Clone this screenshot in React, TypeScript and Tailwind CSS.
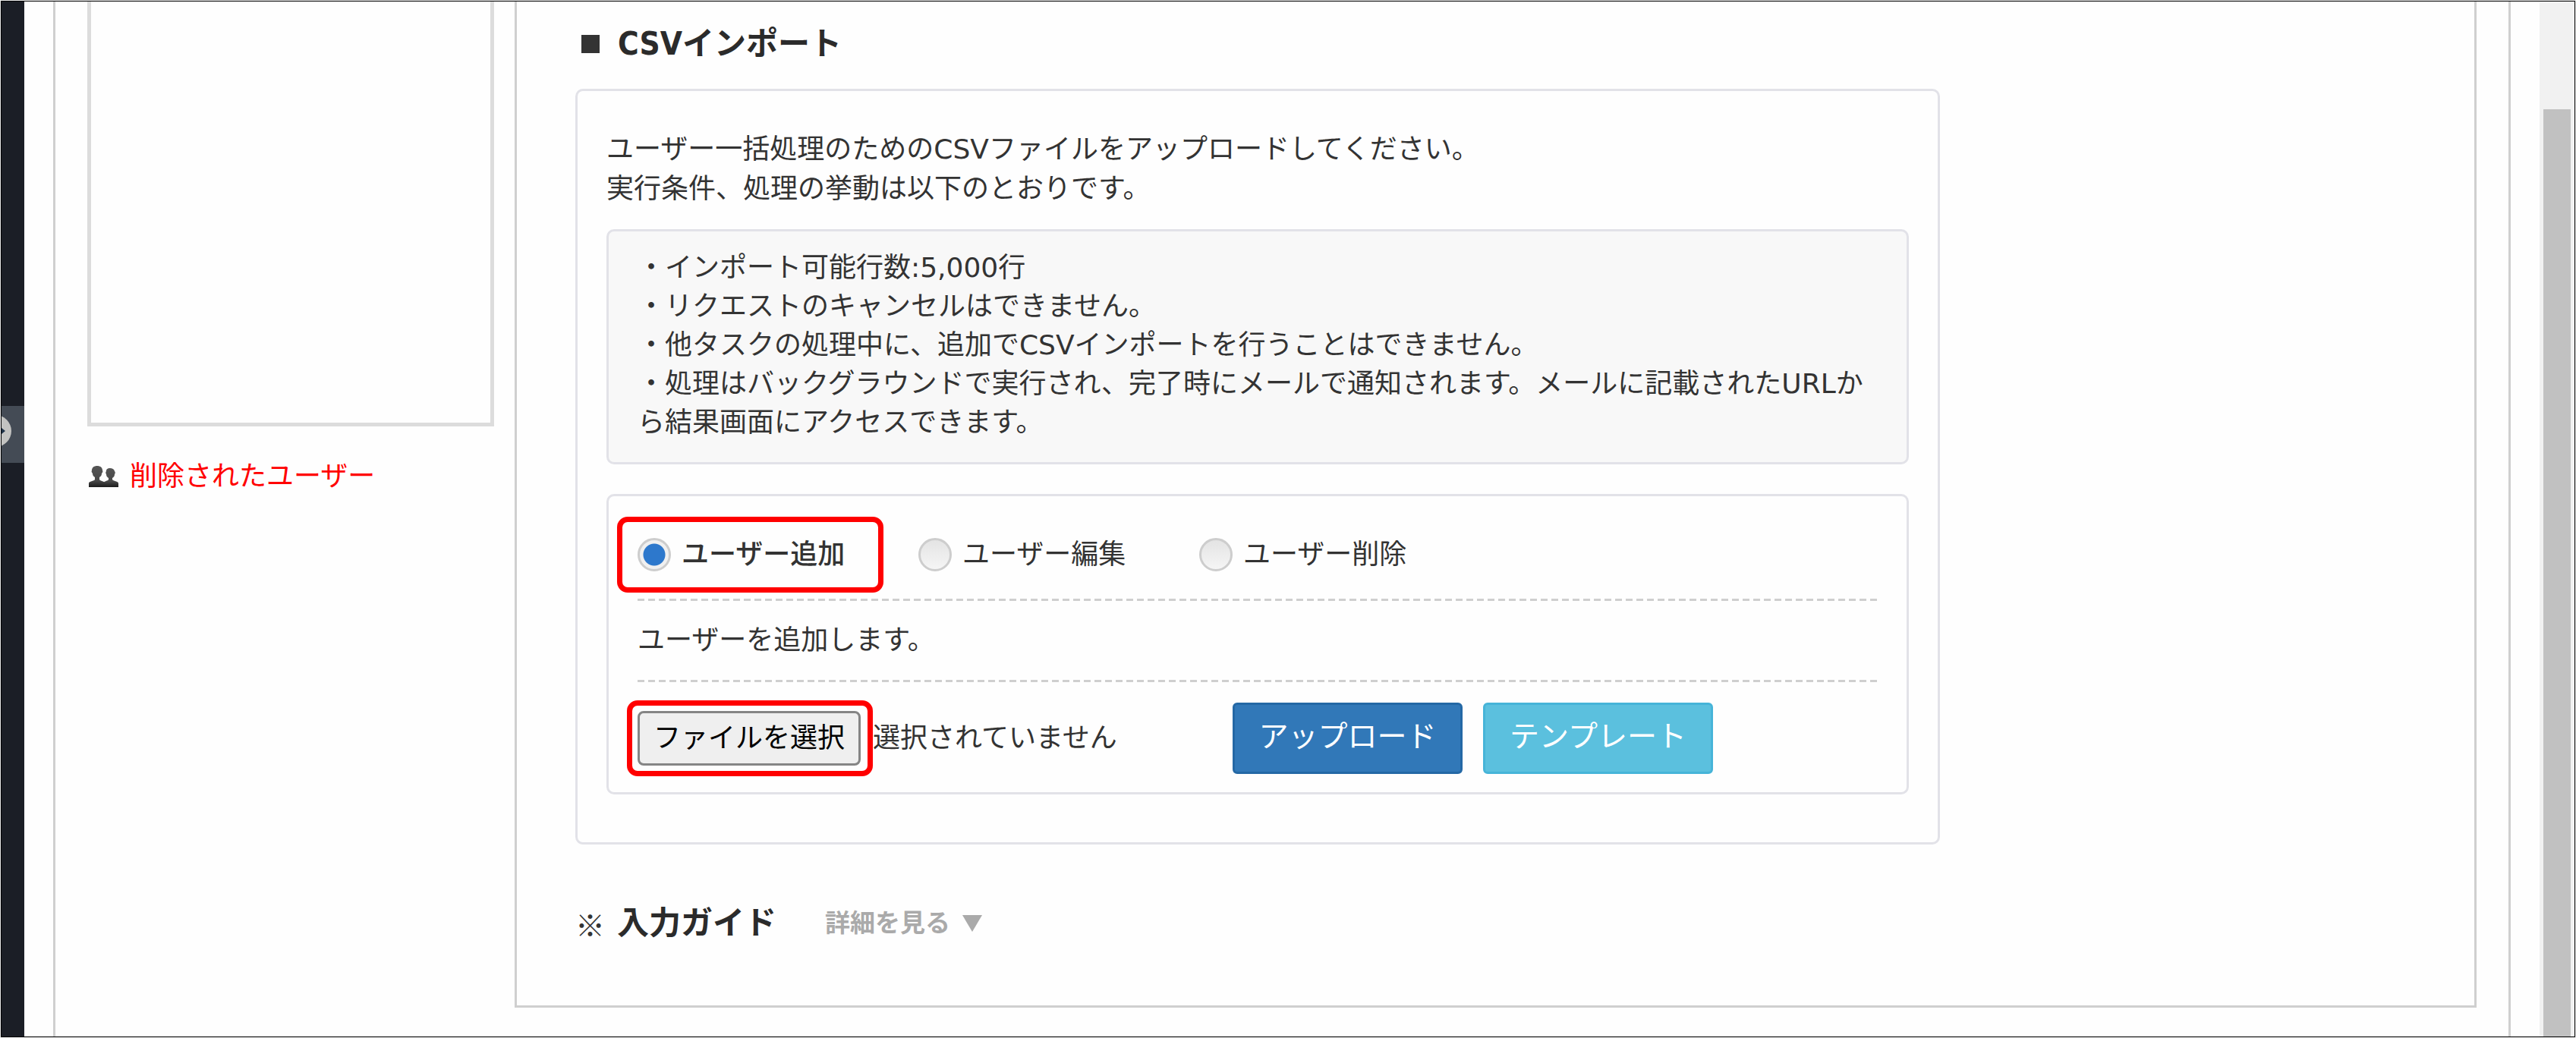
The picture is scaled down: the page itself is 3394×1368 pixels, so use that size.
import { useRef, useState } from 'react'

type Mode = 'add' | 'edit' | 'delete'

const modes: { value: Mode; label: string; description: string }[] = [
  { value: 'add', label: 'ユーザー追加', description: 'ユーザーを追加します。' },
  { value: 'edit', label: 'ユーザー編集', description: 'ユーザーを編集します。' },
  { value: 'delete', label: 'ユーザー削除', description: 'ユーザーを削除します。' },
]

const notes = [
  '・インポート可能行数:5,000行',
  '・リクエストのキャンセルはできません。',
  '・他タスクの処理中に、追加でCSVインポートを行うことはできません。',
  '・処理はバックグラウンドで実行され、完了時にメールで通知されます。メールに記載されたURLから結果画面にアクセスできます。',
]

function UsersIcon() {
  return (
    <svg viewBox="0 0 39 28" className="h-7 w-[39px] shrink-0" aria-hidden="true">
      <defs>
        <linearGradient id="users-fill" x1="0" y1="0" x2="0" y2="1">
          <stop offset="0" stopColor="#555" />
          <stop offset="0.7" stopColor="#484848" />
          <stop offset="1" stopColor="#1c1c1c" />
        </linearGradient>
      </defs>
      <path
        fill="url(#users-fill)"
        d="M20 28v-6c0-2 5-2 6-4v-2c-2-1-3-3-3-5-1-1-1-3 0-4 0-3 2-4 5-4s5 1 6 4c1 1 1 3 0 4 0 2-1 4-3 5v2c1 2 8 2 8 5v5z"
      />
      <path
        fill="url(#users-fill)"
        d="M0 28v-5c0-3 7-3 8-5v-3c-2-1-3-3-3-5-1-1-2-3-1-4 0-4 3-6 7-6s7 2 7 6c1 1 0 3-1 4 0 2-1 4-3 5v3c1 2 7 2 8 5v5z"
      />
    </svg>
  )
}

function Highlight({ className }: { className: string }) {
  return (
    <span
      className={`pointer-events-none absolute rounded-[14px] border-[7px] border-[#ff0000] ${className}`}
    />
  )
}

function Divider() {
  return (
    <div className="h-[3px] bg-[repeating-linear-gradient(90deg,#cfcfcf_0_9px,transparent_9px_14px)]" />
  )
}

function ImportForm() {
  const [mode, setMode] = useState<Mode>('add')
  const [fileName, setFileName] = useState('')
  const fileRef = useRef<HTMLInputElement>(null)

  return (
    <form
      className="mt-[39px] rounded-[10px] border-[3px] border-[#e2e2e8] px-[38px] pb-6"
      onSubmit={(e) => e.preventDefault()}
    >
      <div className="flex pt-[54px] pb-9">
        {modes.map(({ value, label }) => (
          <label
            key={value}
            className={`relative flex h-[45px] w-[370px] items-center gap-[14px] leading-[45px] ${
              mode === value ? 'font-medium' : ''
            }`}
          >
            <input
              type="radio"
              name="mode"
              value={value}
              checked={mode === value}
              onChange={() => setMode(value)}
              className="size-11 appearance-none rounded-full border-[3px] border-[#cdcdcd] bg-linear-to-b from-[#e4e4e4] to-[#f5f5f5] checked:bg-[radial-gradient(circle,#2d78cc_14px,#f0f0f0_15px)]"
            />
            {label}
            {value === 'add' && <Highlight className="-top-[27px] -left-[27px] h-[100px] w-[351px]" />}
          </label>
        ))}
      </div>
      <Divider />
      <p className="py-[26px] leading-[52px]">
        {modes.find((m) => m.value === mode)?.description}
      </p>
      <Divider />
      <div className="flex items-center pt-[27px]">
        <div className="relative w-[294px]">
          <input
            ref={fileRef}
            id="csv-file"
            type="file"
            accept=".csv"
            aria-label="CSVファイル"
            className="hidden"
            onChange={(e) => setFileName(e.target.files?.[0]?.name ?? '')}
          />
          <button
            type="button"
            className="h-[72px] w-full rounded-lg border-[3px] border-[#858585] bg-[#efefef] text-black"
            onClick={() => fileRef.current?.click()}
          >
            ファイルを選択
          </button>
          <Highlight className="-top-[14px] -left-[14px] h-[100px] w-[324px]" />
        </div>
        <span className="w-[490px] pl-4">{fileName || '選択されていません'}</span>
        <button
          type="submit"
          className="h-[94px] w-[303px] rounded-md border-[3px] border-[#2468a5] bg-[#3178b8] pb-1 text-[39px] text-white"
        >
          アップロード
        </button>
        <button
          type="button"
          className="ml-[27px] h-[94px] w-[303px] rounded-md border-[3px] border-[#46b4d8] bg-[#5bc0de] pb-1 text-[39px] text-white"
        >
          テンプレート
        </button>
      </div>
    </form>
  )
}

function Sidebar() {
  return (
    <aside className="w-[536px] shrink-0">
      <div className="h-[560px] border-[5px] border-t-0 border-[#dcdcdc]" />
      <a href="#deleted" className="mt-10 flex items-center gap-[15px] pl-0.5 leading-[52px] text-[#ff0000]">
        <UsersIcon />
        削除されたユーザー
      </a>
    </aside>
  )
}

export default function App() {
  return (
    <div
      lang="ja"
      className="flex min-h-screen bg-[#eee] p-px font-['DejaVu_Sans','Noto_Sans_CJK_JP',sans-serif] text-[36px] text-[#333]"
    >
      <div className="flex flex-1 border border-black bg-[#fefefe]">
        <nav className="w-[30px] shrink-0 bg-[#1b1e26] pt-[533px]">
          <div className="h-[75px] overflow-hidden bg-[#444b55] pt-3">
            <svg viewBox="0 0 14 42" className="h-[42px] w-[14px]" aria-hidden="true">
              <circle cx="-8" cy="21" r="21" fill="#c3c3c1" />
              <path d="M0 17l5 4-5 4z" fill="#1f3247" />
            </svg>
          </div>
        </nav>

        <div className="mx-[38px] flex flex-1 border-x-[3px] border-[#cfcfcf] px-[42px]">
          <Sidebar />
          <main className="ml-[27px] flex-1 self-start border-[3px] border-t-0 border-[#cfcfcf] pl-[77px] pb-[78px]">
            <h2 className="flex items-center pt-6 font-['DejaVu_Sans_Condensed','Noto_Sans_CJK_JP',sans-serif] text-[42px] leading-[64px] font-bold text-[#2b2b2b]">
              <span className="ml-2 mr-6 size-6 bg-[#333]" />
              CSVインポート
            </h2>

            <section className="mt-[27px] w-[1798px] rounded-[10px] border-[3px] border-[#e2e2e8] px-[38px] pt-[51px] pb-[63px]">
              <p className="leading-[52px]">
                ユーザー一括処理のためのCSVファイルをアップロードしてください。
                <br />
                実行条件、処理の挙動は以下のとおりです。
              </p>
              <ul className="mt-[27px] rounded-[10px] border-[3px] border-[#e2e2e8] bg-[#f8f8f8] px-[38px] pt-[22px] pb-[27px] leading-[51px]">
                {notes.map((note) => (
                  <li key={note}>{note}</li>
                ))}
              </ul>
              <ImportForm />
            </section>

            <div className="mt-[74px] flex items-center leading-[60px]">
              <span className="w-[55px] font-['Noto_Sans_CJK_JP',sans-serif] text-[39px]">※</span>
              <h3 className="text-[42px] font-bold text-[#2b2b2b]">入力ガイド</h3>
              <button
                type="button"
                className="ml-16 flex items-center gap-4 text-[33px] font-bold text-[#aaa]"
              >
                詳細を見る
                <svg viewBox="0 0 26 22" className="h-[22px] w-[26px]" fill="#aaa" aria-hidden="true">
                  <path d="M0 0h26L13 22z" />
                </svg>
              </button>
            </div>
          </main>
        </div>

        <div className="w-[46px] shrink-0 bg-[#f1f1f1] px-[5px] pt-[142px]">
          <div className="h-full bg-[#c1c1c1]" />
        </div>
      </div>
    </div>
  )
}
